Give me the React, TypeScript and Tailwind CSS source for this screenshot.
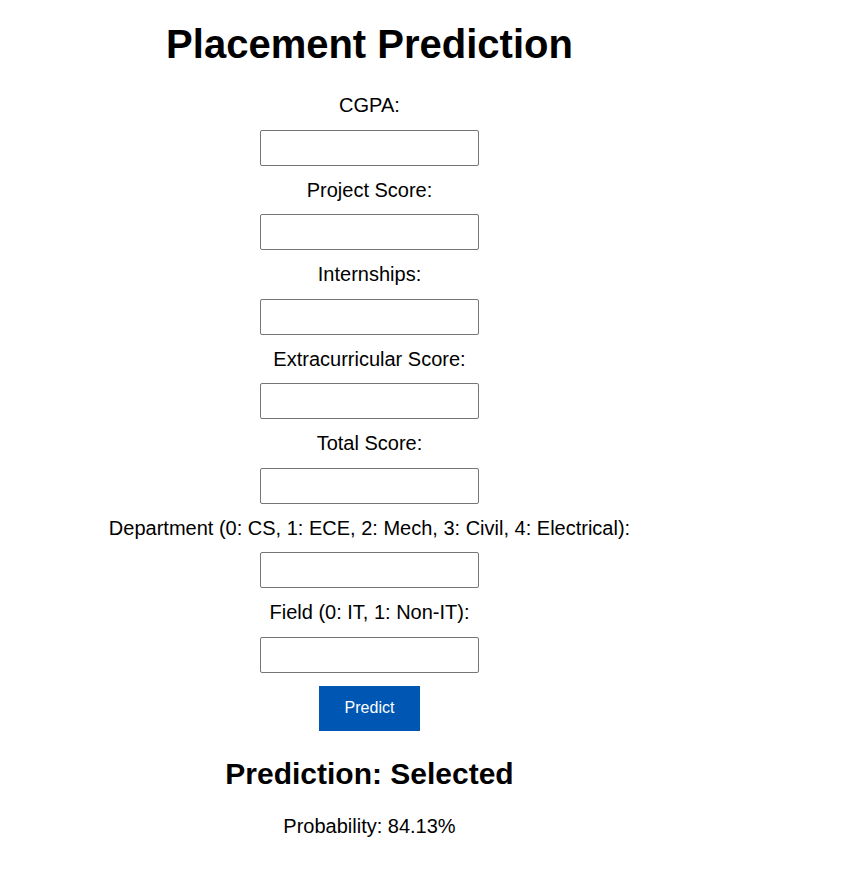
const fields = [
  'CGPA:',
  'Project Score:',
  'Internships:',
  'Extracurricular Score:',
  'Total Score:',
  'Department (0: CS, 1: ECE, 2: Mech, 3: Civil, 4: Electrical):',
  'Field (0: IT, 1: Non-IT):',
];

export default function App() {
  return (
    <div className="min-h-screen bg-white text-black" style={{ fontFamily: '"Liberation Sans", Arial, sans-serif' }}>
      <div className="w-[739px] flex flex-col items-center text-center">
        <h1 className="mt-[21px] mb-[14px] text-[40px] leading-[46px] font-bold">Placement Prediction</h1>
        {fields.map((f) => (
          <div key={f} className="flex flex-col items-center">
            <label className="block h-[48.5px] leading-[48.5px] text-[20px] whitespace-nowrap">{f}</label>
            <input type="text" className="w-[219px] h-[36px] border border-[#767676] rounded-[2px] bg-white" />
          </div>
        ))}
        <button className="mt-[13px] w-[101px] h-[45px] bg-[#0056b3] text-white text-[16px]">Predict</button>
        <h2 className="mt-[26px] text-[30px] leading-[34px] font-bold">Prediction: Selected</h2>
        <p className="mt-[24px] text-[20px] leading-[23px]">Probability: 84.13%</p>
      </div>
    </div>
  );
}
